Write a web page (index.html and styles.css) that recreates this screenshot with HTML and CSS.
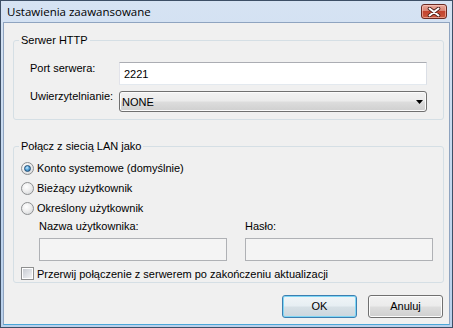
FILE: index.html
```html
<!DOCTYPE html>
<html lang="pl">
<head>
<meta charset="utf-8">
<title>Ustawienia zaawansowane</title>
<link rel="stylesheet" href="styles.css">
</head>
<body>
<div class="window">
  <div class="titlebar">
    <span class="title">Ustawienia zaawansowane</span>
    <div class="close" aria-label="Zamknij">
      <svg width="14" height="10" viewBox="0 0 14 10">
        <path d="M2.5 1.5 L11.5 8.5 M11.5 1.5 L2.5 8.5" stroke="#4a1d17" stroke-width="3.6" stroke-linecap="round" fill="none"/>
        <path d="M2.5 1.5 L11.5 8.5 M11.5 1.5 L2.5 8.5" stroke="#ffffff" stroke-width="2" stroke-linecap="round" fill="none"/>
      </svg>
    </div>
  </div>
  <div class="client">
    <fieldset class="group group-http">
      <legend>Serwer HTTP</legend>
      <div class="http-grid">
        <span class="field-label">Port serwera:</span>
        <div class="textbox">2221</div>
        <span class="field-label combo-label">Uwierzytelnianie:</span>
        <div class="combo">
          <span>NONE</span>
          <svg class="arrow" width="7" height="4" viewBox="0 0 7 4"><path d="M0 0 H7 L3.5 4 Z" fill="#000"/></svg>
        </div>
      </div>
    </fieldset>

    <fieldset class="group group-lan">
      <legend>Połącz z siecią LAN jako</legend>
      <div class="lan-body">
        <div class="option"><span class="radio checked"></span><span>Konto systemowe (domyślnie)</span></div>
        <div class="option"><span class="radio"></span><span>Bieżący użytkownik</span></div>
        <div class="option"><span class="radio"></span><span>Określony użytkownik</span></div>
        <div class="creds">
          <div class="cred">
            <span class="cred-label">Nazwa użytkownika:</span>
            <div class="textbox disabled"></div>
          </div>
          <div class="cred">
            <span class="cred-label">Hasło:</span>
            <div class="textbox disabled"></div>
          </div>
        </div>
        <div class="option check-row"><span class="checkbox"></span><span>Przerwij połączenie z serwerem po zakończeniu aktualizacji</span></div>
      </div>
    </fieldset>

    <div class="buttons">
      <div class="btn btn-default">OK</div>
      <div class="btn">Anuluj</div>
    </div>
  </div>
</div>
</body>
</html>
```

FILE: styles.css
```css
html, body {
  margin: 0;
  padding: 0;
  background: #ffffff;
}

body {
  font-family: "Liberation Sans", Arial, sans-serif;
  font-size: 11px;
  color: #000;
}

.window {
  width: 453px;
  height: 328px;
  box-sizing: border-box;
  border: 1px solid #3d4f66;
  background: linear-gradient(#d6e3f3, #c2d6ee 60%, #b9d0eb);
  padding: 0 2px 2px;
  display: flex;
  flex-direction: column;
}

.titlebar {
  height: 21px;
  flex: none;
  display: flex;
  align-items: flex-start;
}

.title {
  font-family: "Open Sans", "Noto Sans", sans-serif;
  font-size: 11.5px;
  line-height: 16px;
  margin: 3px 0 0 4px;
  color: #000;
}

.close {
  margin: 3px 3px 0 auto;
  width: 26px;
  height: 15px;
  box-sizing: border-box;
  border: 1px solid #6b2a22;
  border-radius: 3px;
  background: linear-gradient(#e9a99b 0%, #d98575 45%, #c4432f 50%, #c95a3f 100%);
  box-shadow: inset 0 0 0 1px rgba(255, 210, 200, 0.55);
  display: flex;
  align-items: center;
  justify-content: center;
}

.close svg {
  display: block;
}

.client {
  flex: 1;
  background: #f0f0f0;
  border: 1px solid #8fa4c0;
  border-bottom-color: #4aa6d8;
  padding: 10px 5px 0 9px;
  display: flex;
  flex-direction: column;
}

.group {
  margin: 0;
  padding: 0;
  min-width: 0;
  border: 1px solid #d5dfe5;
  border-radius: 3px;
}

.group legend {
  margin-left: 5px;
  padding: 0 2px;
  line-height: 14px;
  font-size: 11px;
}

.http-grid {
  display: grid;
  grid-template-columns: 89px 308px;
  row-gap: 6px;
  padding: 15px 0 7px 16px;
}

.field-label {
  line-height: 13px;
  align-self: start;
}

.combo-label {
  margin-top: -1px;
}

.textbox {
  height: 23px;
  box-sizing: border-box;
  border: 1px solid;
  border-color: #abadb3 #dbdfe6 #e3e9ef #e2e3ea;
  background: #fff;
  padding: 0 4px;
  display: flex;
  align-items: center;
}

.textbox.disabled {
  border-color: #afb1b5;
  background: #f4f4f4;
}

.combo {
  height: 21px;
  box-sizing: border-box;
  border: 1px solid #707070;
  border-radius: 3px;
  background: linear-gradient(#f2f2f2 0%, #ebebeb 48%, #dddddd 52%, #cfcfcf 100%);
  box-shadow: inset 0 0 0 1px #fbfbfb;
  padding: 0 3px 0 2px;
  display: flex;
  align-items: center;
  justify-content: space-between;
}

.arrow {
  display: block;
  margin-top: 1px;
}

.group-lan {
  margin-top: 19px;
}

.lan-body {
  padding: 5px 0 2px 7px;
  display: flex;
  flex-direction: column;
}

.option {
  height: 20px;
  display: flex;
  align-items: center;
  gap: 3px;
}

.radio {
  width: 13px;
  height: 13px;
  box-sizing: border-box;
  border-radius: 50%;
  border: 1px solid #8d8f91;
  background: radial-gradient(circle at 40% 35%, #ffffff 0%, #eeeeee 45%, #cfd1d4 100%);
  display: flex;
  align-items: center;
  justify-content: center;
  flex: none;
}

.radio.checked::after {
  content: "";
  width: 7px;
  height: 7px;
  box-sizing: border-box;
  border-radius: 50%;
  border: 1px solid #204d75;
  background: radial-gradient(circle at 40% 35%, #c9ecff 0%, #5aa7dc 45%, #1f5f95 100%);
}

.creds {
  margin: 2px 0 0 18px;
  display: grid;
  grid-template-columns: 188px 188px;
  column-gap: 18px;
}

.cred {
  display: flex;
  flex-direction: column;
  gap: 5px;
}

.cred-label {
  line-height: 13px;
}

.check-row {
  height: 13px;
  margin-top: 6px;
}

.checkbox {
  width: 13px;
  height: 13px;
  box-sizing: border-box;
  border: 1px solid #8e8f8f;
  background: #f4f4f4;
  box-shadow: inset 0 0 0 1px #ffffff;
  flex: none;
  display: flex;
  align-items: center;
  justify-content: center;
}

.checkbox::after {
  content: "";
  width: 9px;
  height: 9px;
  background: linear-gradient(135deg, #c8ccd2 0%, #e2e4e8 60%, #f4f4f4 100%);
}

.buttons {
  margin-top: 12px;
  padding-right: 1px;
  display: flex;
  justify-content: flex-end;
  gap: 11px;
}

.btn {
  width: 75px;
  height: 23px;
  box-sizing: border-box;
  border: 1px solid #707070;
  border-radius: 3px;
  background: linear-gradient(#f2f2f2 0%, #ebebeb 48%, #dddddd 52%, #cfcfcf 100%);
  box-shadow: inset 0 0 0 1px #fcfcfc;
  display: flex;
  align-items: center;
  justify-content: center;
  line-height: 13px;
}

.btn-default {
  border-color: #3c7fb1;
  box-shadow: inset 0 0 0 1px #7fd6f5;
  background: linear-gradient(#f0f5f8 0%, #e6eef3 48%, #d6e0e6 52%, #cbd6dd 100%);
}
```
